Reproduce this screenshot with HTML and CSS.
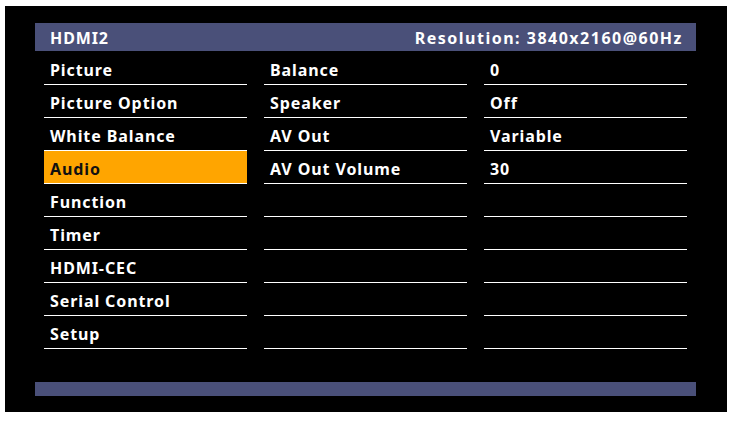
FILE: index.html
```html
<!DOCTYPE html>
<html lang="en">
<head>
  <meta charset="UTF-8" />
  <title>HDMI2 Audio Menu</title>
  <link rel="stylesheet" href="styles.css">
</head>
<body>
  <div class="screen">
    <div class="osd">
      <div class="title-bar">
        <span>HDMI2</span>
        <span class="res">Resolution: 3840x2160@60Hz</span>
      </div>
      <div class="columns">
        <ul class="col">
          <li>Picture</li>
          <li>Picture Option</li>
          <li>White Balance</li>
          <li class="active">Audio</li>
          <li>Function</li>
          <li>Timer</li>
          <li>HDMI-CEC</li>
          <li>Serial Control</li>
          <li>Setup</li>
        </ul>
        <ul class="col">
          <li>Balance</li>
          <li>Speaker</li>
          <li>AV Out</li>
          <li>AV Out Volume</li>
          <li></li>
          <li></li>
          <li></li>
          <li></li>
          <li></li>
        </ul>
        <ul class="col">
          <li>0</li>
          <li>Off</li>
          <li>Variable</li>
          <li>30</li>
          <li></li>
          <li></li>
          <li></li>
          <li></li>
          <li></li>
        </ul>
      </div>
      <div class="status-bar"></div>
    </div>
  </div>
</body>
</html>
```

FILE: styles.css
```css
:root {
  --bar: #4a5079;
  --active: #ffa500;
  --line: #ffffff;
  --row: 33px;
}
* { box-sizing: border-box; margin: 0; padding: 0; }
body {
  background: #fff;
  font-family: 'Noto Sans', sans-serif;
  font-weight: 700;
  font-size: 16px;
  letter-spacing: 0.9px;
  color: #fff;
}
.screen {
  margin: 6px 0 0 5px;
  width: 722px;
  height: 406px;
  background: #000;
  padding: 17px 31px 0 30px;
}
.title-bar {
  height: 28px;
  background: var(--bar);
  display: flex;
  justify-content: space-between;
  align-items: center;
  padding: 2px 14px 0 15px;
}
.title-bar .res { letter-spacing: 1.5px; margin-right: -1px; }
.columns {
  display: grid;
  grid-template-columns: repeat(3, 203px);
  column-gap: 17px;
  padding-left: 9px;
  margin-top: 1px;
}
.col { list-style: none; }
.col li {
  height: var(--row);
  border-bottom: 1px solid var(--line);
  padding: 3px 0 0 6px;
  display: flex;
  align-items: center;
}
.col li.active {
  background: var(--active);
  color: #111;
}
.status-bar {
  margin-top: 33px;
  height: 14px;
  background: var(--bar);
}
```
